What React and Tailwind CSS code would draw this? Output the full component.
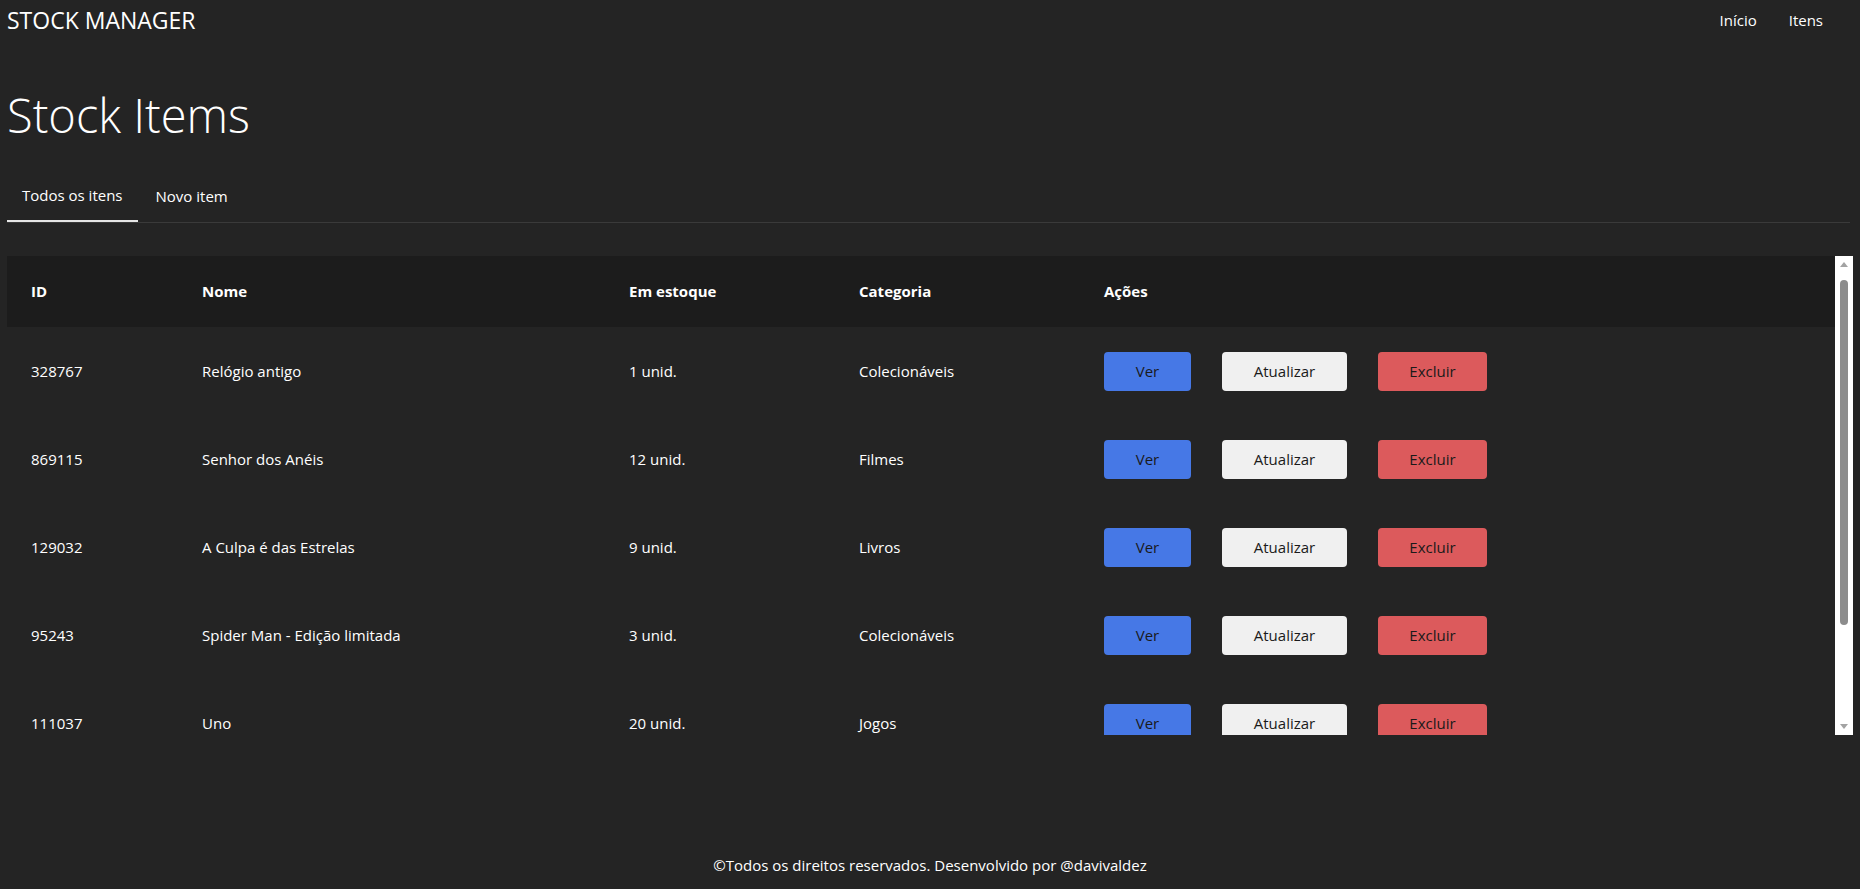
const items = [
  { id: "328767", name: "Relógio antigo", qty: 1, category: "Colecionáveis" },
  { id: "869115", name: "Senhor dos Anéis", qty: 12, category: "Filmes" },
  { id: "129032", name: "A Culpa é das Estrelas", qty: 9, category: "Livros" },
  { id: "95243", name: "Spider Man - Edição limitada", qty: 3, category: "Colecionáveis" },
  { id: "111037", name: "Uno", qty: 20, category: "Jogos" },
  { id: "504221", name: "Cubo Mágico", qty: 7, category: "Jogos" },
];

const cols = "grid grid-cols-[171px_427px_230px_245px_1fr] items-center";

const Scrollbar = () => (
  <div className="w-[18px] bg-white flex flex-col items-center">
    <div className="h-[17px] flex items-center justify-center">
      <div className="w-0 h-0 border-l-[4px] border-r-[4px] border-b-[5px] border-l-transparent border-r-transparent border-b-[#a3a3a3]" />
    </div>
    <div className="mt-[7px] w-[8px] h-[345px] rounded-full bg-[#8c8c8c]" />
    <div className="flex-1" />
    <div className="h-[17px] flex items-center justify-center">
      <div className="w-0 h-0 border-l-[4px] border-r-[4px] border-t-[5px] border-l-transparent border-r-transparent border-t-[#a3a3a3]" />
    </div>
  </div>
);

export default function App() {
  return (
    <div className="min-h-screen flex flex-col bg-[#242424] text-white font-['Segoe_UI','Open_Sans',sans-serif]">
      <header className="h-10 flex items-center justify-between pl-[7px] pr-[37px]">
        <span className="text-[23px]">STOCK MANAGER</span>
        <nav className="flex gap-[32px] text-[15px]">
          <a>Início</a>
          <a>Itens</a>
        </nav>
      </header>

      <main className="flex-1 px-[7px]">
        <h1 className="mt-[46px] text-[47px] leading-[58px] font-light">Stock Items</h1>

        <div className="mt-[26px] flex border-b border-[#3a3a3a] mr-[3px] text-[15px]">
          <button className="px-[15px] h-[52px] border-b-2 border-[#e6e6e6] -mb-px">Todos os itens</button>
          <button className="px-[18px] h-[52px]">Novo item</button>
        </div>

        <div className="mt-[33px] flex h-[479px]">
          <div className="flex-1 overflow-hidden text-[15px]">
            <div className={`${cols} h-[71px] bg-[#1c1c1c] font-bold px-6`}>
              <span>ID</span>
              <span>Nome</span>
              <span>Em estoque</span>
              <span>Categoria</span>
              <span>Ações</span>
            </div>
            {items.map((item) => (
              <div key={item.id} className={`${cols} h-[88px] px-6`}>
                <span>{item.id}</span>
                <span>{item.name}</span>
                <span>{item.qty} unid.</span>
                <span>{item.category}</span>
                <div className="flex gap-[31px] text-[#1a1a1a]">
                  <button className="w-[87px] h-[39px] rounded bg-[#4678e6]">Ver</button>
                  <button className="w-[125px] h-[39px] rounded bg-[#f0f0f0]">Atualizar</button>
                  <button className="w-[109px] h-[39px] rounded bg-[#dc5a5c]">Excluir</button>
                </div>
              </div>
            ))}
          </div>
          <Scrollbar />
        </div>
      </main>

      <footer className="h-12 flex items-center justify-center text-[15px]">
        ©Todos os direitos reservados. Desenvolvido por @davivaldez
      </footer>
    </div>
  );
}
